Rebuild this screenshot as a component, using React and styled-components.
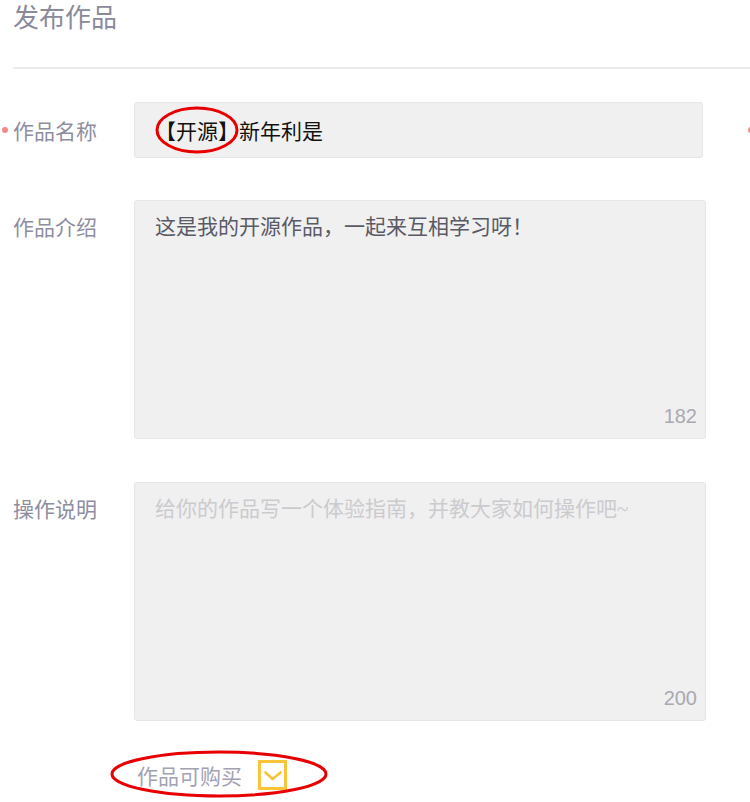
import React from "react";
import styled, { createGlobalStyle } from "styled-components";

const Global = createGlobalStyle`
  html, body { margin: 0; padding: 0; background: #fff; }
  body { font-family: "Noto Sans CJK SC", "Noto Sans", sans-serif; overflow: hidden; }
  * { box-sizing: border-box; }
`;

const Page = styled.div`
  width: 750px;
  height: 802px;
  position: relative;
  overflow: hidden;
  padding-left: 13px;
`;

const Header = styled.div`
  height: 69px;
  border-bottom: 2px solid #ebebeb;
  padding-top: 1px;
`;

const Title = styled.h1`
  margin: 0;
  font-size: 26px;
  line-height: 30px;
  font-weight: 400;
  color: #8a8a9a;
`;

const Form = styled.div`
  display: flex;
  flex-direction: column;
  padding-top: 33px;
`;

const Row = styled.div`
  position: relative;
  display: flex;
  align-items: ${(p) => (p.$top ? "flex-start" : "center")};
  margin-bottom: ${(p) => p.$gap || 0}px;
`;

const Label = styled.label`
  position: relative;
  width: 121px;
  flex: none;
  font-size: 21px;
  line-height: 24px;
  color: #8e8ea0;
  padding-top: ${(p) => (p.$top ? 14 : 0)}px;
`;

const Dot = styled.span`
  position: absolute;
  left: ${(p) => p.$left}px;
  top: 50%;
  width: 6px;
  height: 6px;
  margin-top: -3px;
  border-radius: 50%;
  background: #f28a8a;
`;

const TextInput = styled.input`
  width: 569px;
  height: 56px;
  background: #f0f0f0;
  border: 1px solid #e6e6e6;
  border-radius: 3px;
  padding: 0 0 0 20px;
  font-family: "Noto Sans CJK SC", sans-serif;
  font-size: 21px;
  color: #111;
  outline: none;
`;

const AreaWrap = styled.div`
  position: relative;
  width: 572px;
  height: 239px;
`;

const Area = styled.textarea`
  width: 100%;
  height: 100%;
  resize: none;
  background: #f0f0f0;
  border: 1px solid #e6e6e6;
  border-radius: 3px;
  padding: 12px 20px;
  font-family: "Liberation Serif", "Noto Sans CJK SC", serif;
  font-size: 21px;
  line-height: 28px;
  color: #5a5a66;
  outline: none;
  &::placeholder { color: #cbcbcf; }
`;

const Counter = styled.span`
  position: absolute;
  right: 9px;
  bottom: 11px;
  font-family: "Liberation Sans", Arial, sans-serif;
  font-size: 20px;
  line-height: 24px;
  color: #a9a9b3;
`;

const BuyRow = styled.div`
  position: relative;
  display: flex;
  align-items: center;
  gap: 16px;
  padding-left: 124px;
`;

const BuyLabel = styled.span`
  font-size: 21px;
  line-height: 28px;
  color: #a2a2b2;
`;

const Check = styled.span`
  width: 29px;
  height: 30px;
  flex: none;
  border: 3px solid #f9c33a;
  display: flex;
  align-items: center;
  justify-content: center;
  padding-top: 2px;
`;

const Mark = styled.svg`
  position: absolute;
  pointer-events: none;
  overflow: visible;
`;

export default function App() {
  return (
    <>
      <Global />
      <Page>
        <Header>
          <Title>发布作品</Title>
        </Header>
        <Form>
          <Row $gap={42}>
            <Label>
              <Dot $left={-11} />
              作品名称
            </Label>
            <TextInput readOnly defaultValue="【开源】新年利是" />
            <Dot $left={735} />
            <Mark style={{ left: 143, top: 5 }} width="84" height="46">
              <ellipse cx="41" cy="23" rx="40" ry="22" fill="none" stroke="#e80000" strokeWidth="3" />
            </Mark>
          </Row>
          <Row $top $gap={43}>
            <Label $top>作品介绍</Label>
            <AreaWrap>
              <Area readOnly defaultValue="这是我的开源作品，一起来互相学习呀！" />
              <Counter>182</Counter>
            </AreaWrap>
          </Row>
          <Row $top $gap={39}>
            <Label $top>操作说明</Label>
            <AreaWrap>
              <Area readOnly placeholder="给你的作品写一个体验指南，并教大家如何操作吧~" />
              <Counter>200</Counter>
            </AreaWrap>
          </Row>
          <BuyRow>
            <BuyLabel>作品可购买</BuyLabel>
            <Check>
              <svg width="18" height="10" viewBox="0 0 18 10" style={{ flex: "none" }}>
                <path d="M1.5 1.5 L8.5 8 L16.5 1.5" fill="none" stroke="#f9c33a" strokeWidth="2.6" strokeLinecap="round" strokeLinejoin="round" />
              </svg>
            </Check>
            <Mark style={{ left: 97, top: -10 }} width="218" height="48">
              <ellipse cx="109" cy="24" rx="107" ry="22" fill="none" stroke="#e80000" strokeWidth="3" />
            </Mark>
          </BuyRow>
        </Form>
      </Page>
    </>
  );
}
